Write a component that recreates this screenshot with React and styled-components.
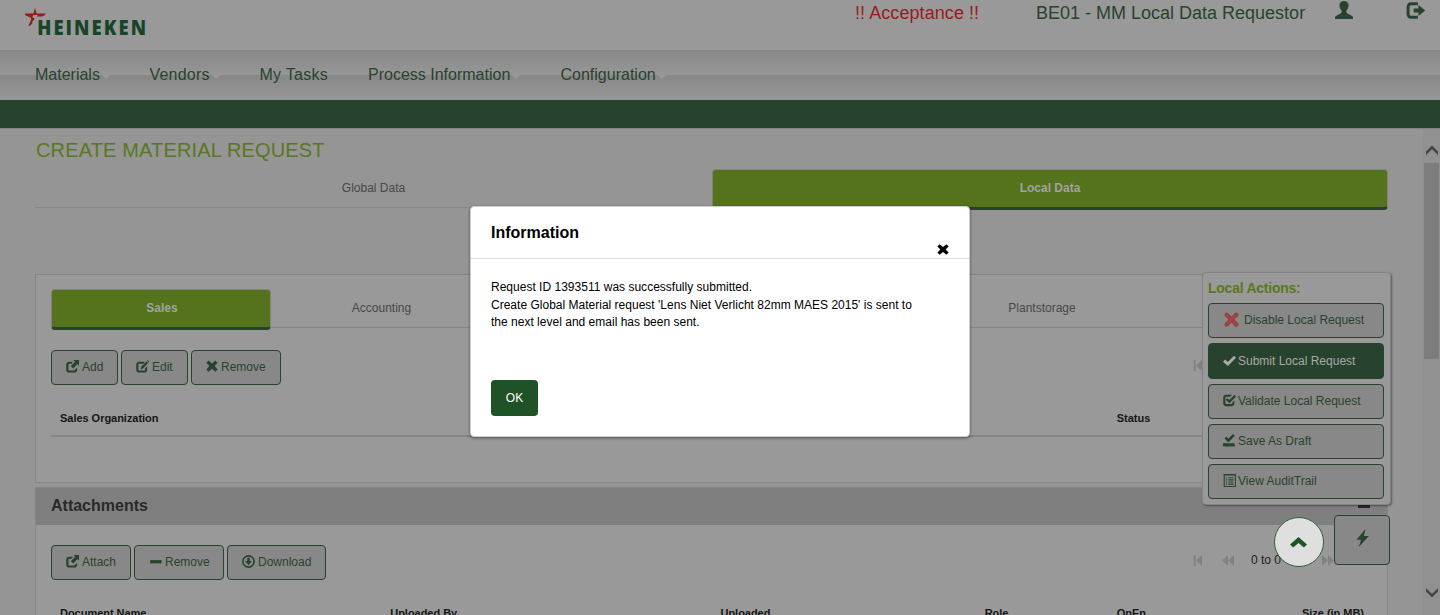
import React from "react";
import styled, { createGlobalStyle, css } from "styled-components";

const c = {
  green: "#28432d",
  lime: "#55721d",
  line: "#868686",
  page: "#959595",
  panel: "#999999",
  button: "#888888",
};

const Global = createGlobalStyle`
  * { box-sizing: border-box; }
  html, body { margin: 0; height: 100%; overflow: hidden; background: ${c.page}; }
  body { font: 12px/17px "Liberation Sans", Arial, sans-serif; color: #222; }
  svg { display: block; flex: none; }
  button { font: inherit; }
`;

const Page = styled.div`
  width: 1440px;
  height: 615px;
  display: flex;
  flex-direction: column;
  overflow: hidden;
  position: relative;
`;

const Header = styled.header`
  height: 50px;
  flex: none;
  background: ${c.panel};
  display: flex;
  align-items: flex-start;
  padding-left: 24px;
  color: ${c.green};
  font-size: 18px;
  line-height: 26px;
`;

const Logo = styled.svg`
  margin-right: auto;
`;

const HeaderText = styled.span`
  white-space: nowrap;
  color: ${(p) => (p.$alert ? "#9a1a20" : c.green)};
  width: ${(p) => p.$width}px;
  letter-spacing: ${(p) => p.$track || 0}px;
`;

const HeaderIcon = styled.span`
  width: ${(p) => p.$width}px;
  padding-top: 1px;
`;

const Nav = styled.nav`
  height: 50px;
  flex: none;
  padding-left: 35px;
  display: flex;
  background: linear-gradient(#878787, #979797) 0 0 / 100% 25px repeat-y;
`;

const NavItem = styled.a`
  display: flex;
  align-items: center;
  gap: 2px;
  width: ${(p) => p.$width}px;
  font-size: 16px;
  line-height: 50px;
  padding-bottom: 1px;
  color: ${c.green};
  white-space: nowrap;
  letter-spacing: ${(p) => p.$track || 0}px;
`;

const Caret = styled.i`
  border: 4px solid transparent;
  border-top-color: #999;
  border-bottom: 0;
  margin-top: 5px;
`;

const Band = styled.div`
  height: 29px;
  flex: none;
  background: ${c.green};
  border-bottom: 1px solid #838383;
`;

const Main = styled.div`
  flex: 1;
  min-height: 0;
  display: flex;
  justify-content: space-between;
  background: ${c.page};
`;

const Content = styled.main`
  width: 1388px;
  padding-left: 35px;
  overflow: hidden;
`;

const Title = styled.h1`
  margin: 0;
  height: 40px;
  padding: 8px 0 0 1px;
  font-size: 20px;
  line-height: 26px;
  font-weight: 400;
  letter-spacing: 0.15px;
  color: #59771f;
`;

const Tabs = styled.div`
  display: grid;
  grid-template-columns: ${(p) => p.$columns};
  height: 41px;
`;

const Tab = styled.div`
  height: ${(p) => (p.$active ? 41 : 39)}px;
  padding-left: ${(p) => p.$shift || 0}px;
  text-align: center;
  line-height: 39px;
  font-size: 12px;
  color: #484848;
  border-bottom: 1px solid ${c.line};
  ${(p) =>
    p.$active &&
    css`
      background: ${c.lime};
      color: #a2a2a2;
      font-weight: 700;
      border: 1px solid #7f8676;
      border-bottom: 3px solid ${c.green};
      border-radius: 4px;
      line-height: 37px;
    `}
`;

const Panel = styled.section`
  border: 1px solid ${c.line};
  background: ${c.panel};
  padding: ${(p) => p.$pad || "0"};
  height: ${(p) => p.$height}px;
  margin-top: ${(p) => p.$gap}px;
`;

const PanelTitle = styled.h2`
  margin: 0;
  height: 37px;
  padding: 0 17px 0 15px;
  display: flex;
  justify-content: space-between;
  font-size: 16px;
  line-height: 35px;
  background: #7f7f7f;
  color: #292929;
`;

const Collapse = styled.i`
  width: 12px;
  height: 3px;
  margin-top: 17px;
  background: #292929;
`;

const PanelBody = styled.div`
  padding: 20px 15px 0;
`;

const Toolbar = styled.div`
  display: flex;
  justify-content: space-between;
  align-items: center;
  height: 35px;
  margin-top: ${(p) => p.$top || 0}px;
`;

const Group = styled.div`
  display: flex;
  gap: 3px;
`;

const Button = styled.button`
  height: ${(p) => p.$height || 35}px;
  width: ${(p) => (p.$width ? p.$width + "px" : "auto")};
  padding: 0 0 ${(p) => (p.$primary ? 0 : 1)}px 14px;
  display: flex;
  align-items: center;
  gap: ${(p) => p.$gap ?? 3}px;
  white-space: nowrap;
  border: 1px solid ${c.green};
  border-radius: 4px;
  background: ${(p) => (p.$primary ? c.green : c.button)};
  color: ${(p) => (p.$primary ? "#a9a9a9" : c.green)};
  svg { margin-top: -2px; }
`;

const Pager = styled.div`
  display: flex;
  align-items: center;
  width: 179px;
  color: #1c1c1c;
  margin-top: -5px;
`;

const PagerIcon = styled.span`
  width: ${(p) => p.$width}px;
  color: #828282;
`;

const PagerCount = styled.span`
  width: 71px;
  white-space: nowrap;
`;

const TableHead = styled.div`
  display: grid;
  grid-template-columns: ${(p) => p.$columns};
  height: 52px;
  padding-top: 25px;
  border-bottom: 2px solid ${c.line};
  font-size: 11px;
  line-height: 17px;
  font-weight: 700;
  color: #161616;
`;

const Cell = styled.span`
  padding: 0 8px 0 9px;
  white-space: nowrap;
  text-align: ${(p) => (p.$end ? "right" : "left")};
  letter-spacing: -0.03px;
`;

const Scrollbar = styled.div`
  width: 17px;
  padding: 15px 1px 16px;
  background: #919191;
  display: flex;
  flex-direction: column;
  align-items: center;
  color: #454545;
`;

const Thumb = styled.div`
  width: 15px;
  height: 196px;
  margin: 7px 0 auto;
  background: #7d7d7d;
`;

const Actions = styled.aside`
  position: absolute;
  left: 1202px;
  top: 272px;
  width: 189px;
  height: 233px;
  padding: 6px 6px 0 5px;
  display: flex;
  flex-direction: column;
  gap: 5px;
  background: ${c.panel};
  border: 1px solid #848484;
  border-radius: 4px;
  box-shadow: 1px 1px 2px rgba(0, 0, 0, 0.4);
`;

const ActionsTitle = styled.h3`
  margin: 0 0 1px;
  font-size: 14px;
  line-height: 18px;
  letter-spacing: -0.25px;
  color: #59771f;
`;

const QuickButton = styled.button`
  position: absolute;
  left: 1334px;
  top: 515px;
  width: 56px;
  height: 50px;
  padding: 0 0 4px;
  display: grid;
  place-items: center;
  border: 1px solid ${c.green};
  border-radius: 4px;
  background: ${c.button};
  color: ${c.green};
`;

const TopButton = styled.button`
  position: absolute;
  left: 1274px;
  top: 517px;
  width: 50px;
  height: 50px;
  padding: 0 1px 0 0;
  display: grid;
  place-items: center;
  border: 1px solid #2c6236;
  border-radius: 50%;
  background: #dfdfdf;
  color: #1f5428;
`;

const Dialog = styled.div`
  position: absolute;
  left: 470px;
  top: 206px;
  width: 500px;
  height: 231px;
  background: #fff;
  border: 1px solid #d0d0d0;
  border-radius: 4px;
  box-shadow: 0 1px 3px rgba(0, 0, 0, 0.5);
  color: #000;
`;

const DialogHead = styled.div`
  height: 52px;
  padding: 0 20px;
  display: flex;
  justify-content: space-between;
  border-bottom: 1px solid #dcdcdc;
`;

const DialogTitle = styled.h2`
  margin: 0;
  font-size: 16px;
  line-height: 51px;
`;

const Close = styled.span`
  padding-top: 37px;
`;

const DialogBody = styled.div`
  padding: 20px 20px 0;
  height: 121px;
  line-height: 17.6px;
  p { margin: 0; white-space: nowrap; letter-spacing: 0.01px; }
`;

const Ok = styled.button`
  margin-left: 20px;
  width: 47px;
  height: 36px;
  padding: 0;
  border: 0;
  border-radius: 4px;
  background: #205228;
  color: #fff;
`;

const shapes = {
  user: <path d="M8 0C5.4 0 3.9 1.600 3.9 4c0 1.700.8 3.300 1.900 4.200v1.600c0 .6-.3 1-.9 1.300L1.200 13C.4 13.400 0 14 0 15v1h16v-1c0-1-.4-1.600-1.200-2l-3.700-1.900c-.6-.3-.9-.7-.9-1.300V8.200c1.100-.9 1.900-2.500 1.900-4.200C12.100 1.600 10.600 0 8 0z" />,
  logout: <path d="M10 1H4.500C2 1 .5 2.500.5 5v6c0 2.500 1.500 4 4 4H10v-2.500H4.800C3.500 12.500 3 12 3 10.800V5.200C3 4 3.500 3.500 4.800 3.500H10zM10.500 3.300v3H6.500v3.400h4v3L16.300 8z" />,
  share: <path d="M8.500 2H4C1.600 2 .3 3.300.3 5.500V12C.3 14.200 1.600 15.500 4 15.500h6.200c2.200 0 3.500-1.300 3.500-3.500V9.600l-2.700 2.400c-.1.500-.5.900-1.100.9H4.500c-1 0-1.500-.5-1.500-1.500V6c0-1 .5-1.500 1.500-1.500h2.300zM9.200 0H16v7l-2-2-5.100 5.500L5.900 7.600 11.200 2z" />,
  edit: <path d="M11 2H4C1.600 2 .3 3.300.3 5.500V12C.3 14.200 1.600 15.500 4 15.500h6.200c2.200 0 3.500-1.300 3.500-3.500V8l-2.500 2.300v1.100c0 1-.5 1.500-1.500 1.500H4.300c-1 0-1.400-.5-1.400-1.500V6c0-1 .4-1.500 1.400-1.500H9zM12.800 1.700l2 2-6.300 6.700-3 1 1-3zM13.500 1l1-1 2 2-1 1z" />,
  remove: <path d="M3.500.5L8 4.500l4.500-4 3 3L11.500 8l4 4.500-3 3-4.500-4-4.500 4-3-3 4-4.500-4-4.500z" />,
  minus: <path d="M1.500 6.300h14v4h-14z" />,
  download: <><circle cx="8" cy="8" r="6.900" fill="none" stroke="currentColor" strokeWidth="1.900" /><path d="M6.500 3.500h3v4h2.700L8 12.500 3.800 7.500h2.700z" /></>,
  ok: <path d="M0 9.500l2.700-2.600L6 9.700 13.500 2 16 4.500 6 14.700z" />,
  check: <path d="M11 1H4C1.600 1 .3 2.300.3 4.500V11.500C.3 13.700 1.600 15 4 15h6.500c2.200 0 3.500-1.300 3.500-3.500V8l-2.500 2.400v.5c0 1-.5 1.500-1.400 1.500H4.300c-1 0-1.400-.5-1.400-1.500V5c0-1 .4-1.500 1.400-1.500H9zM3.500 7l1.800-1.800 2.500 2.300L14 1.200 16 3.200 7.900 11.300z" />,
  save: <path d="M0 11.500h14.500V15.500H0zM2 5.500l2.300-2.300 2.300 2.500L12.200 0l2.300 2.300-7.900 8.200z" />,
  list: <><path d="M1.500.7h13.700v14.600H1.500z" fill="none" stroke="currentColor" strokeWidth="1.300" /><path d="M1 0h15v1.800H1zM3.500 4h1.600v1.300H3.500zm3 0H13v1.300H6.500zM3.500 6.600h1.600v1.300H3.500zm3 0H13v1.300H6.500zM3.500 9.200h1.600v1.300H3.500zm3 0H13v1.300H6.500zM3.500 11.800h1.600v1.300H3.500zm3 0H13v1.300H6.500z" /></>,
  bolt: <path d="M10.800 0L2.300 9.500h4.400L4.500 16 14 6.200H9.300z" />,
  up: <path d="M8 2.200l8 8L13 13.200 8 8.400l-5 4.800L0 10.200z" />,
  first: <path d="M1 0h3v16H1zM13 0v16L4.500 8z" />,
  back: <path d="M8 0v16L0 8zM16 0v16L8 8z" />,
  next: <path d="M0 0l8 8-8 8zM8 0l8 8-8 8z" />,
  chevronUp: <path d="M8 2l8 8v4.500L8 7 0 14.500V10z" />,
  chevronDown: <path d="M8 14l8-8V1.500L8 9 0 1.500v4.500z" />,
};

function Icon({ name, size = 13, height }) {
  return (
    <svg width={size} height={height || size} viewBox="0 0 16 16" fill="currentColor" preserveAspectRatio="none">
      {shapes[name]}
    </svg>
  );
}

function RedCross() {
  return (
    <svg width="17" height="16" viewBox="0 0 16 16">
      <path d="M3.200 3.800l9.600 9.600M12.800 3.800l-9.600 9.600" stroke="#973a3b" strokeWidth="4.200" strokeLinecap="round" />
      <path d="M3.300 3.900l9.400 9.400M12.700 3.900l-9.400 9.400" stroke="#a34546" strokeWidth="2.600" strokeLinecap="round" />
    </svg>
  );
}

function PagerControl({ count }) {
  return (
    <Pager>
      <PagerIcon $width={29}><Icon name="first" size={11} height={11} /></PagerIcon>
      <PagerIcon $width={29}><Icon name="back" size={12} height={11} /></PagerIcon>
      <PagerCount>{count}</PagerCount>
      <PagerIcon $width={40}><Icon name="next" size={12} height={11} /></PagerIcon>
    </Pager>
  );
}

export default function App() {
  return (
    <Page>
      <Global />
      <Header>
        <Logo width="130" height="45" viewBox="24 0 130 45">
          <path d="M35 8l1.700 5.500h8.800L45 15l-3 1.500h-5.300l1-1.400h-4.200l-1.200 1.900 2.200 1.500-.8 2-1.200.6-.2 2.500L29.700 26l-1.200-.5L31 20v-2l-6-3v-1.500h8.300z" fill="#98191f" />
          <text x="41.300" y="34.800" transform="scale(.9 1)" textLength="121" lengthAdjust="spacing" fontFamily="'Open Sans', 'Noto Sans', sans-serif" fontWeight="800" fontSize="20.500" fill="#18452a">HEINEKEN</text>
        </Logo>
        <HeaderText $alert $width={181} $track={0.07}>!! Acceptance !!</HeaderText>
        <HeaderText $width={299}>BE01 - MM Local Data Requestor</HeaderText>
        <HeaderIcon $width={71}><Icon name="user" size={18} /></HeaderIcon>
        <HeaderIcon $width={34}><Icon name="logout" size={19} /></HeaderIcon>
      </Header>
      <Nav>
        <NavItem $width={114.5}>Materials<Caret /></NavItem>
        <NavItem $width={110} $track={0.2}>Vendors<Caret /></NavItem>
        <NavItem $width={108.5} $track={0.25}>My Tasks</NavItem>
        <NavItem $width={192.5}>Process Information<Caret /></NavItem>
        <NavItem $width={120}>Configuration<Caret /></NavItem>
      </Nav>
      <Band />
      <Main>
        <Content>
          <Title>CREATE MATERIAL REQUEST</Title>
          <Tabs $columns="1fr 676px">
            <Tab>Global Data</Tab>
            <Tab $active>Local Data</Tab>
          </Tabs>
          <Panel $height={209} $gap={64} $pad="14px 15px 0">
            <Tabs $columns="repeat(6, 220px) 1fr">
              <Tab $active $shift={2}>Sales</Tab>
              <Tab $shift={1}>Accounting</Tab>
              <Tab />
              <Tab />
              <Tab $shift={2}>Plantstorage</Tab>
              <Tab />
            </Tabs>
            <Toolbar $top={20}>
              <Group>
                <Button $width={67}><Icon name="share" />Add</Button>
                <Button $width={67}><Icon name="edit" />Edit</Button>
                <Button $width={90}><Icon name="remove" size={12} />Remove</Button>
              </Group>
              <PagerControl />
            </Toolbar>
            <TableHead $columns="80% 20%">
              <Cell>Sales Organization</Cell>
              <Cell>Status</Cell>
            </TableHead>
          </Panel>
          <Panel $height={140} $gap={4}>
            <PanelTitle>Attachments<Collapse /></PanelTitle>
            <PanelBody>
              <Toolbar>
                <Group>
                  <Button $width={80}><Icon name="share" />Attach</Button>
                  <Button $width={90}><Icon name="minus" size={13} />Remove</Button>
                  <Button $width={99}><Icon name="download" />Download</Button>
                </Group>
                <PagerControl count="0 to 0" />
              </Toolbar>
              <TableHead $columns="25% 25% 20% 10% 10% 10%">
                <Cell>Document Name</Cell>
                <Cell>Uploaded By</Cell>
                <Cell>Uploaded</Cell>
                <Cell>Role</Cell>
                <Cell>OpEn</Cell>
                <Cell $end>Size (in MB)</Cell>
              </TableHead>
            </PanelBody>
          </Panel>
        </Content>
        <Scrollbar>
          <Icon name="chevronUp" size={12} height={12} />
          <Thumb />
          <Icon name="chevronDown" size={12} height={12} />
        </Scrollbar>
      </Main>
      <Actions>
        <ActionsTitle>Local Actions:</ActionsTitle>
        <Button $gap={4}><RedCross />Disable Local Request</Button>
        <Button $primary $height={36} $gap={2}><Icon name="ok" />Submit Local Request</Button>
        <Button $gap={2}><Icon name="check" />Validate Local Request</Button>
        <Button $gap={2}><Icon name="save" />Save As Draft</Button>
        <Button $gap={2}><Icon name="list" />View AuditTrail</Button>
      </Actions>
      <QuickButton><Icon name="bolt" size={17} height={18} /></QuickButton>
      <TopButton><Icon name="up" size={17} height={15} /></TopButton>
      <Dialog role="dialog">
        <DialogHead>
          <DialogTitle>Information</DialogTitle>
          <Close><Icon name="remove" size={12} height={11} /></Close>
        </DialogHead>
        <DialogBody>
          <p>Request ID 1393511 was successfully submitted.</p>
          <p>Create Global Material request 'Lens Niet Verlicht 82mm MAES 2015' is sent to</p>
          <p>the next level and email has been sent.</p>
        </DialogBody>
        <Ok>OK</Ok>
      </Dialog>
    </Page>
  );
}
